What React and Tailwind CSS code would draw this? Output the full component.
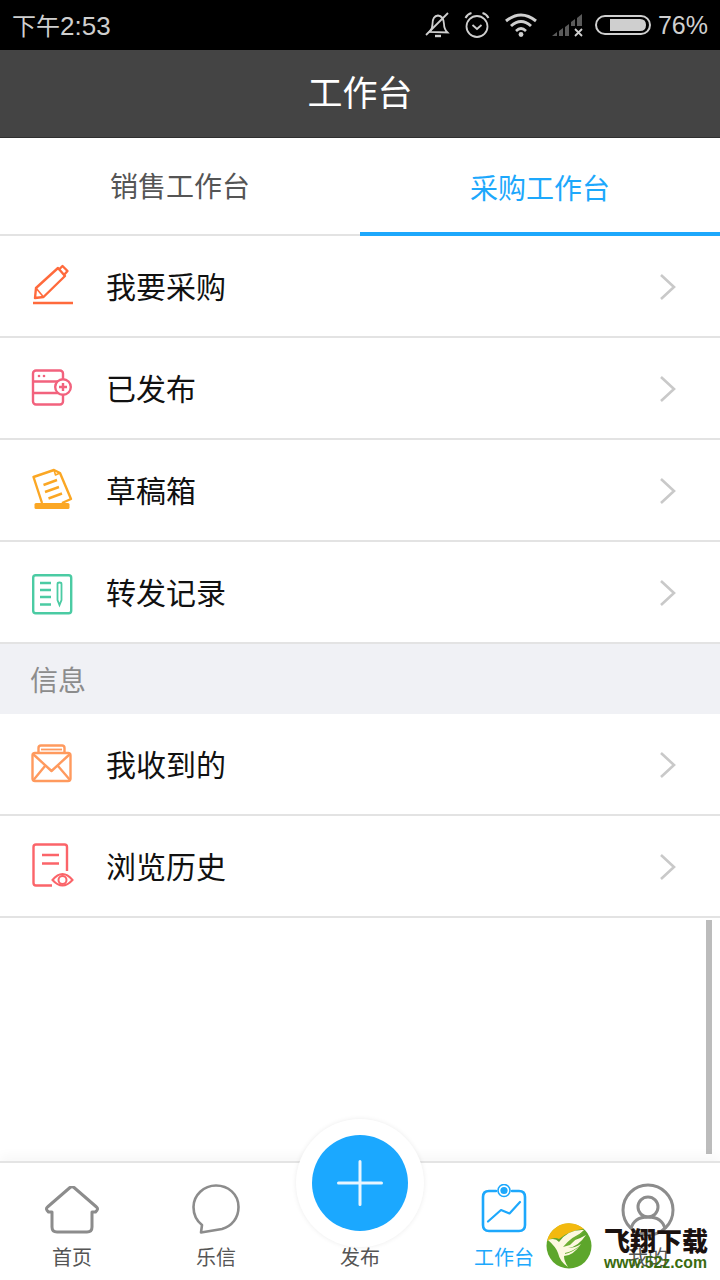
const CJK = { fontFamily: '"Noto Sans CJK SC", sans-serif' };

function Chevron() {
  return (
    <svg width="18" height="28" viewBox="0 0 18 28" className="ml-auto mr-[43px] mt-[2px]" fill="none" stroke="#c9c9c9" strokeWidth="2.6">
      <path d="M2 2 L15 14 L2 26" />
    </svg>
  );
}

function Row({ label, icon }) {
  return (
    <div className="flex h-[102px] items-center border-b-2 border-[#e3e3e3] bg-white">
      <div className="w-[106px] flex-none pl-[28px]">{icon}</div>
      <span className="pb-[2px] text-[30px] text-[#111]" style={CJK}>{label}</span>
      <Chevron />
    </div>
  );
}

const Pen = (
  <svg width="48" height="48" viewBox="28 262 48 48" fill="none" stroke="#ff6a3c" strokeWidth="2.4" strokeLinejoin="round">
    <path d="M35 298 L36 288 L58 268 L65 276 L43.5 297 Z" />
    <path d="M58.5 270 L62.5 266 L67.5 271 L63.5 275.5" />
    <path d="M33 303 H73" />
    <path d="M36 288 L43.5 297" strokeWidth="1.6" />
  </svg>
);
const Pub = (
  <svg width="48" height="48" viewBox="28 364 48 48" fill="none" stroke="#f2627d" strokeWidth="2.4">
    <rect x="33" y="370.5" width="30" height="34" rx="3" />
    <path d="M33 381.5 H63 M33 393 H63" />
    <circle cx="39" cy="376" r="1.3" fill="#f2627d" stroke="none" />
    <circle cx="44" cy="376" r="1.3" fill="#f2627d" stroke="none" />
    <circle cx="63" cy="387" r="7.8" fill="#fff" />
    <path d="M59 387 H67 M63 383 V391" />
  </svg>
);
const Draft = (
  <svg width="48" height="48" viewBox="28 466 48 48" fill="none" stroke="#fba724" strokeWidth="2.4" strokeLinejoin="round">
    <path d="M42 503 L33.5 477 L54 470 L60 473 L71 499 L62 503" />
    <path d="M54 470 L55.5 475 L60 473" strokeWidth="1.6" />
    <path d="M43.5 485 L57 480 M45 492 L59 487 M48.5 498.5 L62 493.5" />
    <rect x="34.5" y="503" width="35" height="6" rx="1.5" fill="#fba724" stroke="none" />
  </svg>
);
const Forward = (
  <svg width="48" height="48" viewBox="28 568 48 48" fill="none" stroke="#4bcba3" strokeWidth="2.4">
    <rect x="33.2" y="575.2" width="38" height="38" rx="2.5" />
    <path d="M40 583 H51 M40 590 H51 M40 597 H51 M40 604.5 H51" />
    <path d="M57.5 584 Q57.5 582.5 59.5 582.5 Q61.5 582.5 61.5 584 V600 L59.5 605 L57.5 600 Z" strokeWidth="1.8" />
  </svg>
);
const Mail = (
  <svg width="48" height="48" viewBox="28 740 48 48" fill="none" stroke="#ff9a5e" strokeWidth="2.4" strokeLinejoin="round">
    <path d="M38.5 752 V748 Q38.5 745.5 41 745.5 H62 Q64.5 745.5 64.5 748 V752" />
    <path d="M41 749.5 H62" strokeWidth="1.8" />
    <rect x="32.5" y="753" width="38" height="28" rx="2.5" />
    <path d="M33 754 L51.5 771 L70 754 M33.5 780 L45 766 M58 766 L70 780" />
  </svg>
);
const History = (
  <svg width="48" height="48" viewBox="28 842 48 48" fill="none" stroke="#fb6469" strokeWidth="2.4">
    <path d="M52 885.5 H36 Q33.5 885.5 33.5 883 V847 Q33.5 844.5 36 844.5 H64.5 Q67 844.5 67 847 V871" />
    <path d="M42 855 H59 M42 863.5 H59" />
    <path d="M52.5 880 Q62.5 868 72.5 880 Q62.5 891 52.5 880 Z" strokeWidth="2" fill="#fff" />
    <circle cx="62.5" cy="880" r="4" strokeWidth="2" />
  </svg>
);

function NavItem({ label, icon, active }) {
  return (
    <div className="flex w-[144px] flex-col items-center">
      <div className="flex h-[73px] items-end">{icon}</div>
      <span
        className={`mt-[6px] text-[20px] leading-[30px] ${active ? "text-[#1da8fc]" : "text-[#555]"}`}
        style={CJK}
      >
        {label}
      </span>
    </div>
  );
}

export default function App() {
  return (
    <div className="flex h-[1280px] w-[720px] flex-col overflow-hidden bg-white">
      {/* Status bar */}
      <div className="flex h-[50px] flex-none items-center bg-black pl-[12px] pr-[12px] text-[#cfcfcf]">
        <span className="pt-[2px] text-[26px] leading-none" style={{ fontFamily: '"Liberation Sans", "Noto Sans CJK SC", sans-serif' }}>
          <span className="text-[24px]" style={CJK}>下午</span>2:53
        </span>
        <div className="ml-auto flex items-center">
          <svg width="26" height="28" viewBox="0 0 26 28" fill="none" stroke="#cfcfcf" strokeWidth="1.8">
            <path d="M4.5 21 Q7.5 18 7.5 13 Q7.5 5 13 4.5 Q18.5 5 19 13 Q19 18 22.5 21.5 Z" />
            <path d="M1 24 L23 2" />
            <path d="M10 25 H16" strokeWidth="2.4" />
          </svg>
          <svg className="ml-[12px]" width="28" height="28" viewBox="0 0 28 28" fill="none" stroke="#cfcfcf" strokeWidth="1.8">
            <circle cx="14" cy="15.5" r="10.5" />
            <path d="M9.5 14 L14 18 L18.5 14" />
            <path d="M2.5 7 Q4.5 3 8.5 2 M19.5 2 Q23.5 3 25.5 7" strokeWidth="2" />
          </svg>
          <svg className="ml-[13px]" width="34" height="26" viewBox="0 0 34 26" fill="none" stroke="#cfcfcf" strokeWidth="3">
            <path d="M2 9 Q17 -3 32 9" />
            <path d="M7 14 Q17 5 27 14" />
            <path d="M12 19 Q17 14 22 19" strokeWidth="2.6" />
            <circle cx="17" cy="22.5" r="2.4" fill="#cfcfcf" stroke="none" />
          </svg>
          <svg className="ml-[13px]" width="34" height="26" viewBox="0 0 34 26">
            <path d="M1 24 L6 20 V24 Z M8 19 L12 16 V24 H8 Z" fill="#5a5a5a" />
            <path d="M14 15 L18 12 V24 H14 Z M20 10 L24 7 V14 H20 Z M26 6 L31 2 V14 H26 Z" fill="#5a5a5a" />
            <path d="M24 17 L31 24 M31 17 L24 24" stroke="#cfcfcf" strokeWidth="1.8" />
          </svg>
          <svg className="ml-[10px]" width="56" height="20" viewBox="0 0 56 20" fill="none">
            <rect x="1" y="1" width="54" height="18" rx="9" stroke="#cfcfcf" strokeWidth="2" />
            <path d="M15 4 H45 Q51 4 51 10 Q51 16 45 16 H15 Z" fill="#cfcfcf" />
          </svg>
          <span className="ml-[7px] text-[25px] leading-none" style={{ fontFamily: '"Liberation Sans", sans-serif' }}>76%</span>
        </div>
      </div>

      {/* Title bar */}
      <div className="flex h-[88px] flex-none items-center justify-center border-b border-[#2f2f2f] bg-[#444444] pb-[4px]">
        <span className="text-[35px] text-white" style={CJK}>工作台</span>
      </div>

      {/* Tabs */}
      <div className="flex h-[98px] flex-none bg-white">
        <div className="flex flex-1 items-center justify-center border-b-2 border-[#e3e3e3] pb-[3px]">
          <span className="text-[28px] text-[#555]" style={CJK}>销售工作台</span>
        </div>
        <div className="flex flex-1 items-center justify-center border-b-4 border-[#1da8fc] pt-[3px]">
          <span className="text-[28px] text-[#1da8fc]" style={CJK}>采购工作台</span>
        </div>
      </div>

      {/* Content */}
      <div className="relative min-h-0 flex-1 bg-white">
        <Row label="我要采购" icon={Pen} />
        <Row label="已发布" icon={Pub} />
        <Row label="草稿箱" icon={Draft} />
        <Row label="转发记录" icon={Forward} />
        <div className="flex h-[70px] items-center bg-[#f0f1f5] pl-[30px]">
          <span className="text-[28px] text-[#8c8c8c]" style={CJK}>信息</span>
        </div>
        <Row label="我收到的" icon={Mail} />
        <Row label="浏览历史" icon={History} />
        <div className="absolute left-[706px] top-[684px] h-[234px] w-[6px] bg-[#bcbcbc]" />
      </div>

      {/* Bottom nav */}
      <div className="relative flex h-[119px] flex-none border-t-2 border-[#e4e4e4] bg-white shadow-[0_-6px_10px_rgba(0,0,0,0.03)]">
        <NavItem
          label="首页"
          icon={
            <svg width="56" height="50" viewBox="44 1186 56 50" fill="none" stroke="#8c8c8c" strokeWidth="3" strokeLinejoin="round">
              <path d="M52 1212 H48.5 Q45 1209 47.5 1207 L70 1187.5 Q72 1186 74 1187.5 L96.5 1207 Q99 1209 95.5 1212 H92 V1227 Q92 1232 87 1232 H57 Q52 1232 52 1227 Z" />
            </svg>
          }
        />
        <NavItem
          label="乐信"
          icon={
            <svg width="50" height="52" viewBox="191 1184 50 52" fill="none" stroke="#8c8c8c" strokeWidth="2.6" strokeLinejoin="round">
              <path d="M202 1225 L201 1232.5 L222 1229 C232 1226 238.5 1218 238.5 1207 C238.5 1194 228 1185.5 216 1185.5 C204 1185.5 193.5 1195 193.5 1207 C193.5 1215 197 1221 202 1225 Z" />
            </svg>
          }
        />
        <NavItem label="发布" icon={<div className="h-[50px] w-[50px]" />} />
        <NavItem
          label="工作台"
          active
          icon={
            <svg width="46" height="52" viewBox="481 1184 46 52" fill="none" stroke="#1da8fc" strokeWidth="2.6" strokeLinejoin="round" strokeLinecap="round">
              <path d="M496 1191 H489 Q483 1191 483 1197 V1225 Q483 1231 489 1231 H519 Q525 1231 525 1225 V1197 Q525 1191 519 1191 H512" />
              <circle cx="504" cy="1190.5" r="6" fill="#fff" strokeWidth="1.6" />
              <circle cx="504" cy="1190.5" r="3.6" fill="#1da8fc" stroke="none" />
              <path d="M488 1221.5 L501 1210 L509.5 1213.5 L520 1202" strokeWidth="2.2" />
            </svg>
          }
        />
        <NavItem
          label="我的"
          icon={
            <svg width="54" height="54" viewBox="621 1182 54 54" fill="none" stroke="#8c8c8c" strokeWidth="3">
              <circle cx="648" cy="1210" r="25" />
              <circle cx="648" cy="1207" r="10" />
              <path d="M631 1229 C633 1220 640 1217 648 1217 C656 1217 663 1220 665 1229" />
            </svg>
          }
        />

        {/* Floating publish button */}
        <div className="absolute left-[296px] top-[-44px] flex h-[128px] w-[128px] items-center justify-center rounded-full bg-white shadow-[0_0_5px_rgba(0,0,0,0.08)]">
          <div className="flex h-[96px] w-[96px] items-center justify-center rounded-full bg-[#1ba8ff]">
            <svg width="46" height="46" viewBox="0 0 46 46" stroke="#e8f5ff" strokeWidth="3" strokeLinecap="round">
              <path d="M1.5 23 H44.5 M23 1.5 V44.5" />
            </svg>
          </div>
        </div>

        {/* Watermark */}
        <div className="absolute left-[546px] top-[60px] flex h-[46px] w-[170px] items-start">
          <svg width="46" height="46" viewBox="0 0 46 46">
            <circle cx="23" cy="23" r="22.5" fill="#5da62b" />
            <path d="M1 18 A22.5 22.5 0 0 1 38 6 Q24 7 13 16 Q8 13 1 18 Z" fill="#f3b90f" />
            <path d="M2 17 Q9 14 13 19 Q22 6 38 7 Q31 13 29 17 Q35 15 40 12 Q32 24 22 25 Q29 25 35 21 Q27 33 18 33 Q18 38 22 44 Q14 39 12 30 Q10 24 2 17 Z" fill="#fdf8e0" />
            <path d="M17 24 Q26 13 38 9 Q29 17 24 22 Z M19 30 Q28 28 36 21 Q28 29 19 31 Z" fill="#6eae33" />
          </svg>
          <div className="ml-[12px] flex flex-col pt-[2px]">
            <span className="text-[26px] font-black leading-[29px] text-[#1b1210]" style={CJK}>飞翔下载</span>
            <span className="text-[15.8px] font-bold leading-[17px] text-[#3b6b10]" style={{ fontFamily: '"Liberation Sans", sans-serif' }}>www.52z.com</span>
          </div>
        </div>
      </div>
    </div>
  );
}
